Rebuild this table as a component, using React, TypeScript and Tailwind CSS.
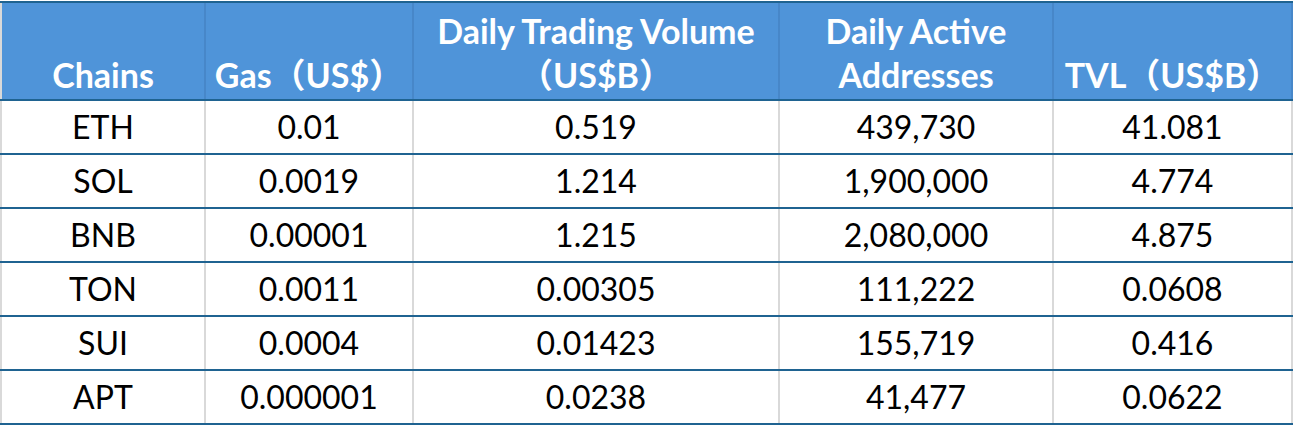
const columns = [
  { key: 'chain', label: 'Chains', width: 'w-[206px]' },
  { key: 'gas', label: 'Gas（US$）', width: 'w-[208px]' },
  { key: 'volume', label: 'Daily Trading Volume（US$B）', width: 'w-[366px]' },
  { key: 'active', label: 'Daily Active Addresses', width: 'w-[274px]' },
  { key: 'tvl', label: 'TVL（US$B）', width: 'w-[239px]' },
];

const rows = [
  ['ETH', '0.01', '0.519', '439,730', '41.081'],
  ['SOL', '0.0019', '1.214', '1,900,000', '4.774'],
  ['BNB', '0.00001', '1.215', '2,080,000', '4.875'],
  ['TON', '0.0011', '0.00305', '111,222', '0.0608'],
  ['SUI', '0.0004', '0.01423', '155,719', '0.416'],
  ['APT', '0.000001', '0.0238', '41,477', '0.0622'],
];

export default function App() {
  return (
    <div className="min-h-screen bg-white pt-[1px] font-['Lato','Noto_Sans_CJK_SC',sans-serif]">
      <div className="w-[1293px]">
        {/* header */}
        <div className="flex border-y-2 border-[#1f6391] bg-[#4f94d9]">
          {columns.map((col, i) => (
            <div
              key={col.key}
              className={`${col.width} h-[96px] flex items-end justify-center pb-[2px] border-r-2 border-[#4787c9] ${
                i === 0 ? 'border-l-2 border-l-[#d9d9d9]' : ''
              }`}
            >
              <span className="text-center text-[34px] leading-[44px] font-bold text-white">
                {col.key === 'volume' ? (
                  <>
                    Daily Trading Volume
                    <br />
                    （US$B）
                  </>
                ) : col.key === 'active' ? (
                  <>
                    Daily Active
                    <br />
                    Addresses
                  </>
                ) : (
                  col.label
                )}
              </span>
            </div>
          ))}
        </div>

        {/* body */}
        {rows.map(row => (
          <div key={row[0]} className="flex border-b-2 border-[#1f6391]">
            {row.map((cell, i) => (
              <div
                key={i}
                className={`${columns[i].width} h-[52px] flex items-center justify-center border-r-2 border-[#d9d9d9] text-[32px] leading-[52px] text-black ${
                  i === 0 ? 'border-l-2' : ''
                }`}
              >
                {cell}
              </div>
            ))}
          </div>
        ))}
      </div>
    </div>
  );
}
